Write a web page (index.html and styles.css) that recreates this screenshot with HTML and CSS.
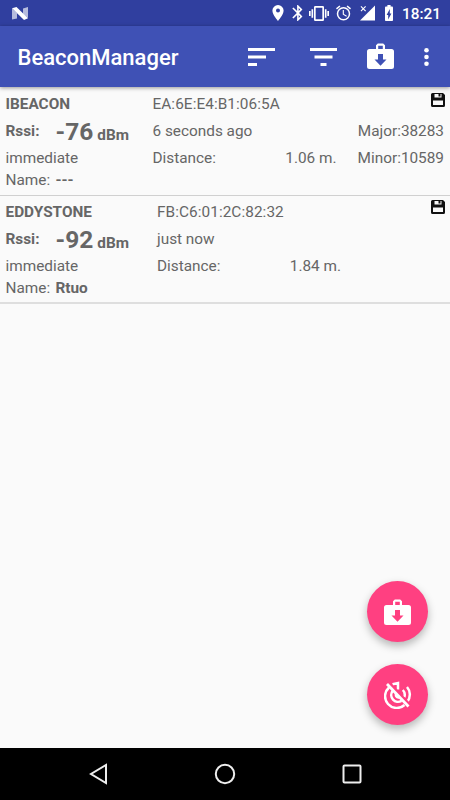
FILE: index.html
```html
<!DOCTYPE html>
<html lang="en">
<head>
<meta charset="utf-8">
<title>BeaconManager</title>
<link rel="stylesheet" href="styles.css">
</head>
<body>
<svg class="defs" width="0" height="0">
  <symbol id="case" viewBox="0 0 27 26"><path fill-rule="evenodd" d="M9 6V2.300L10.800.5h5.400L18 2.300V6h6.500Q27 6 27 8.500V23.500Q27 26 24.500 26H2.500Q0 26 0 23.500V8.500Q0 6 2.500 6ZM11.200 6h4.600V2.800h-4.600ZM11 11v5.500H7.500L13.500 22.800 19.500 16.500H16V11Z"/></symbol>
  <symbol id="save" viewBox="0 0 14 14"><path fill-rule="evenodd" d="M1.500 0H12l2 2v10.500q0 1.500-1.500 1.500h-11Q0 14 0 12.500v-11Q0 0 1.500 0ZM3.500 1v3.500h7V1ZM2 7.500V12h10V7.500Z"/><path d="M7.500 1h2v2.500h-2z"/></symbol>
</svg>
<div class="screen">
  <header class="status">
    <svg class="n-logo" viewBox="0 0 16 13"><path opacity=".65" d="M0 1.500 5 6v5.500L0 12.500ZM16 0v11l-5-4V1.500Z"/><path d="M0 1.200 4.500 0 16 11.200 12 13Z"/></svg>
    <svg class="pin" viewBox="5 2 14 20"><path d="M12 2a7 7 0 0 0-7 7c0 5.250 7 13 7 13s7-7.750 7-13a7 7 0 0 0-7-7zm0 9.500a2.500 2.500 0 1 1 0-5 2.500 2.500 0 0 1 0 5z"/></svg>
    <svg class="bt" viewBox="5.290 2 12.420 20"><path d="M17.710 7.710 12 2h-1v7.590L6.410 5 5 6.410 10.590 12 5 17.590 6.410 19 11 14.410V22h1l5.710-5.710-4.300-4.290 4.300-4.290zM13 5.830l1.880 1.880L13 9.590V5.830zm1.880 10.460L13 18.170v-3.760l1.880 1.880z"/></svg>
    <svg class="vibrate" viewBox="0 3 24 18"><path d="M0 15h2V9H0zm3 2h2V7H3zm19-8v6h2V9zm-3 8h2V7h-2zM16.500 3h-9A1.500 1.500 0 0 0 6 4.500v15A1.500 1.500 0 0 0 7.500 21h9a1.500 1.500 0 0 0 1.500-1.500v-15A1.500 1.500 0 0 0 16.500 3zM16 19H8V5h8z"/></svg>
    <svg class="alarm" viewBox="2 2 20 20"><path d="m22 5.720-4.600-3.860-1.290 1.530 4.600 3.860zM7.880 3.390 6.600 1.860 2 5.710l1.290 1.530zM12.500 8H11v6l4.750 2.850.75-1.230-4-2.370zM12 4a9 9 0 1 0 0 18 9 9 0 0 0 0-18zm0 16a7 7 0 1 1 0-14 7 7 0 0 1 0 14z"/></svg>
    <svg class="signal" viewBox="0 0 16 16"><path d="M16 0v16H0L8.500 7.500Z"/><path class="cross" d="m1 1 5 5M6 1 1 6"/></svg>
    <svg class="battery" viewBox="7 2 10 20"><path d="M15.670 4H14V2h-4v2H8.330C7.600 4 7 4.600 7 5.330v15.330C7 21.400 7.600 22 8.330 22h7.330c.74 0 1.340-.6 1.340-1.330V5.330C17 4.600 16.400 4 15.670 4zM11 20v-5.500H9L13 7v5.500h2z"/></svg>
    <time>18:21</time>
  </header>
  <div class="appbar">
    <h1>BeaconManager</h1>
    <svg class="sort" viewBox="0 0 27 18"><path d="M0 0h27v3H0zM0 7.500h18v3H0zM0 15h9v3H0z"/></svg>
    <svg class="filter" viewBox="0 0 27 18"><path d="M0 0h27v3H0zM4.500 7.500h18v3h-18zM10.500 15h6v3h-6z"/></svg>
    <svg class="bag"><use href="#case"/></svg>
    <svg class="more" viewBox="0 0 5 18"><circle cx="2.500" cy="2.300" r="2.300"/><circle cx="2.500" cy="9" r="2.300"/><circle cx="2.500" cy="15.700" r="2.300"/></svg>
  </div>
  <main>
    <article class="beacon ibeacon">
      <div class="signal-info">
        <b class="line">IBEACON</b>
        <div class="line rssi"><b>Rssi:</b><strong>-76</strong><b class="unit">dBm</b></div>
        <div class="line">immediate</div>
        <div class="line name">Name: <b>---</b></div>
      </div>
      <div class="details">
        <div class="line address">EA:6E:E4:B1:06:5A</div>
        <div class="line middle">6 seconds ago</div>
        <div class="line distance"><span>Distance:</span><span>1.06 m.</span></div>
      </div>
      <div class="ids">
        <svg class="save"><use href="#save"/></svg>
        <div class="line middle">Major:38283</div>
        <div class="line">Minor:10589</div>
      </div>
    </article>
    <article class="beacon eddystone">
      <div class="signal-info">
        <b class="line">EDDYSTONE</b>
        <div class="line rssi"><b>Rssi:</b><strong>-92</strong><b class="unit">dBm</b></div>
        <div class="line">immediate</div>
        <div class="line name">Name: <b>Rtuo</b></div>
      </div>
      <div class="details">
        <div class="line address">FB:C6:01:2C:82:32</div>
        <div class="line middle">just now</div>
        <div class="line distance"><span>Distance:</span><span>1.84 m.</span></div>
      </div>
      <div class="ids"><svg class="save"><use href="#save"/></svg></div>
    </article>
    <div class="actions">
      <button class="fab" aria-label="Import"><svg class="bag"><use href="#case"/></svg></button>
      <button class="fab" aria-label="Stop scan"><svg class="radar" viewBox="0 0 28 28"><g class="arcs"><path d="M5 6.500A11.500 11.500 0 0 0 20.500 24M8.500 10A6.800 6.800 0 0 0 17.500 19.800M12.500 12.500a2.500 2.500 0 0 0 2.500 4M8.500 3.200 14 2v6.500M23 6a11.500 11.500 0 0 1 .5 14.500M18.800 9a7 7 0 0 1 1.500 7.200"/></g><path class="gap" d="m5.500 2 21 22"/><path class="slash" d="m3 3 21.500 22.500"/></svg></button>
    </div>
  </main>
  <nav>
    <svg class="back" viewBox="0 0 19 22"><path d="M17 2v18L2 11Z"/></svg>
    <svg class="home" viewBox="0 0 22 22"><circle cx="11" cy="11" r="9.200"/></svg>
    <svg class="recent" viewBox="0 0 20 20"><rect x="1.500" y="1.500" width="17" height="17" rx="1"/></svg>
  </nav>
</div>
</body>
</html>
```
FILE: styles.css
```css
* { box-sizing: border-box; }
body { margin: 0; font-family: Roboto, sans-serif; }
svg { display: block; flex: none; fill: currentColor; }
.defs { position: absolute; }
.screen { width: 450px; height: 800px; display: flex; flex-direction: column; overflow: hidden; background: #fafafa; }

.status { height: 26px; flex: none; display: flex; align-items: center; background: #303f9f; color: #fff; padding: 0 9px 0 12px; }
.n-logo { width: 16px; height: 13px; margin-right: auto; }
.pin { width: 12px; height: 16px; margin-right: 8px; }
.bt { width: 11px; height: 16px; margin-right: 6px; }
.vibrate { width: 20px; height: 15px; margin-right: 7px; }
.alarm { width: 15px; height: 16px; margin-right: 9px; }
.signal { width: 15px; height: 16px; margin-right: 9px; }
.cross { fill: none; stroke: #fff; stroke-width: 1.2; }
.battery { width: 10px; height: 16px; margin-right: 8px; }
.status time { font-size: 15.4px; font-weight: 500; line-height: 24px; padding-top: 1px; }

.appbar { height: 61px; flex: none; display: flex; align-items: center; padding: 2px 21.500px 0 17.5px; background: #3f51b5; color: #fff; box-shadow: 0 1px 4px rgba(0,0,0,.4); z-index: 1; }
h1 { margin: 0 auto 0 0; font-size: 22px; font-weight: 500; line-height: 30px; }
.sort, .filter { width: 27px; height: 18px; margin-top: -2px; margin-right: 35px; }
.filter { margin-right: 30px; }
.bag { width: 27px; height: 26px; }
.appbar .bag { margin-top: -4px; margin-right: 30px; }
.more { width: 5px; height: 18px; margin-top: -2px; }

main { flex: 1; display: flex; flex-direction: column; font-size: 15.35px; color: #666; }
.beacon { height: 109px; flex: none; display: grid; padding: 6px 6px 0 5.5px; border-bottom: 1px solid #d0d0d0; }
.ibeacon { grid-template-columns: 147px 184px 1fr; }
.eddystone { height: 108px; padding-top: 5px; grid-template-columns: 151.500px 184px 1fr; border-bottom-width: 2px; border-color: #dedede; }
.line { display: block; height: 22px; line-height: 22px; white-space: nowrap; }
.address { letter-spacing: .07px; }
.rssi, .middle { height: 32px; line-height: 33px; }
.rssi { display: flex; align-items: center; }
.rssi strong { font-size: 24.5px; margin: 0 4px 0 16px; }
.unit { padding-top: 8px; }
.name { word-spacing: 1.5px; }
.distance { display: flex; justify-content: space-between; }
.ids { display: flex; flex-direction: column; align-items: flex-end; }
.save { width: 14px; height: 14px; margin: 0 -1px 8px 0; color: #111; }
.eddystone .save { margin-top: -1px; }

.actions { margin: auto 22px 23px auto; display: flex; flex-direction: column; gap: 22px; }
.fab { width: 61px; height: 61px; padding: 0; border: 0; border-radius: 50%; display: grid; place-items: center; color: #fff; background: #ff4081; box-shadow: 0 4px 8px rgba(0,0,0,.28); }
.radar { width: 28px; height: 28px; }
.arcs, .slash, .gap { fill: none; stroke: #fff; stroke-width: 2.5; }
.gap { stroke: #ff4081; stroke-width: 2; }
.slash { stroke-width: 2.8; }

nav { height: 52px; flex: none; display: flex; align-items: center; padding: 0 88px 0 89px; justify-content: space-between; background: #000; color: #eee; }
nav svg { fill: none; stroke: currentColor; stroke-width: 2; }
.back { width: 19px; height: 22px; }
.home { width: 22px; height: 22px; }
.recent { width: 20px; height: 20px; }
```
